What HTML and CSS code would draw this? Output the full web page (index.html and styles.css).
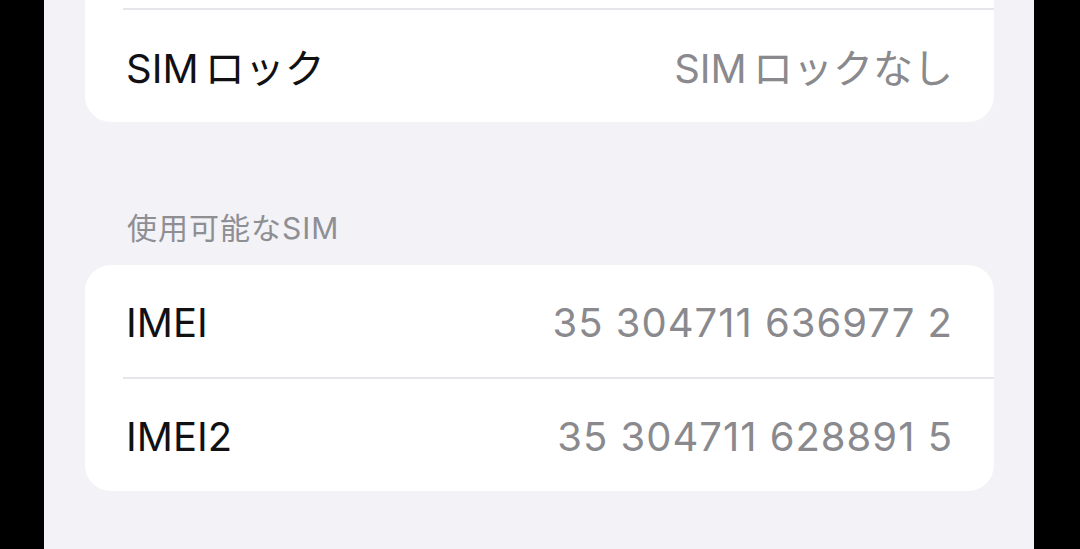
FILE: index.html
```html
<!DOCTYPE html>
<html lang="ja">
<head>
  <meta charset="UTF-8">
  <title>情報</title>
  <link rel="stylesheet" href="styles.css">
</head>
<body>

  <div class="screen">
    <div class="card card-top">
      <div class="row"></div>
      <div class="divider"></div>
      <div class="row">
        <span class="label tight">SIM ロック</span>
        <span class="value tight">SIM ロックなし</span>
      </div>
    </div>

    <div class="section-title">使用可能なSIM</div>

    <div class="card">
      <div class="row">
        <span class="label">IMEI</span>
        <span class="value number">35 304711 636977 2</span>
      </div>
      <div class="divider"></div>
      <div class="row">
        <span class="label">IMEI2</span>
        <span class="value number">35 304711 628891 5</span>
      </div>
    </div>
  </div>

</body>
</html>
```

FILE: styles.css
```css
body {
  margin: 0;
  padding: 0;
  background-color: #000;
  font-family: Inter, "Noto Sans CJK JP", sans-serif;
}

.screen {
  width: 990px;
  height: 549px;
  margin-left: 44px;
  background-color: #f2f2f7;
  overflow: hidden;
}

.card {
  background-color: #fff;
  margin: 0 40px 0 41px;
  border-radius: 26px;
}

.card-top {
  margin-top: -104px;
}

.row {
  height: 112px;
  display: flex;
  align-items: center;
  justify-content: space-between;
  padding: 3px 41px 0 41px;
  box-sizing: border-box;
  font-size: 40px;
}

.card-top .row {
  padding-top: 0;
}

.label {
  color: #111113;
}

.value {
  color: #8a8a8e;
}

.tight {
  word-spacing: -5px;
}

.number {
  letter-spacing: 1px;
}

.divider {
  height: 2px;
  margin-left: 38px;
  background-color: #e6e6ea;
}

.section-title {
  padding: 83px 42px 14px 83px;
  line-height: 46px;
  font-size: 30px;
  letter-spacing: 1px;
  color: #8e8e93;
}
```
